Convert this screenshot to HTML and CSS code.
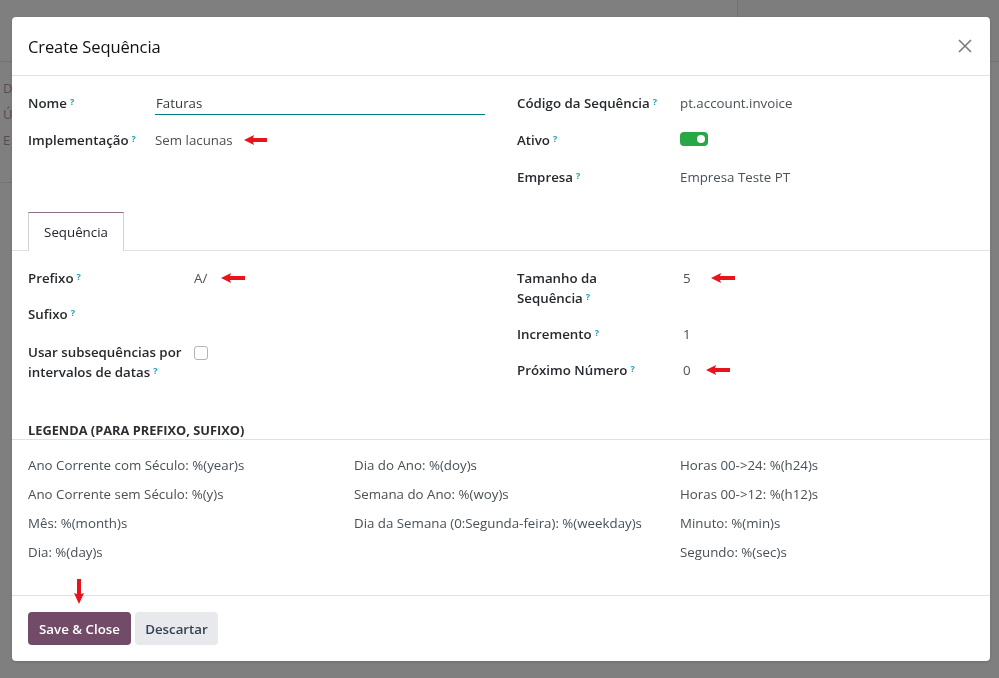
FILE: index.html
```html
<!DOCTYPE html>
<html lang="pt">
<head>
<meta charset="utf-8">
<title>Create Sequência</title>
<link rel="stylesheet" href="styles.css">
</head>
<body>
<div class="backdrop">
  <div class="bg-top">
    <div class="bg-top-left"></div>
    <div class="bg-top-right"></div>
  </div>
  <div class="bg-content">
    <div class="bg-line">D</div>
    <div class="bg-line">Ú</div>
    <div class="bg-line">E</div>
  </div>
</div>

<div class="modal">
  <div class="modal-header">
    <h4 class="modal-title">Create Sequência</h4>
    <button class="close-btn" aria-label="Close">
      <svg width="14" height="14" viewBox="0 0 14 14"><path d="M1 1 L13 13 M13 1 L1 13" stroke="#7b7b7b" stroke-width="1.6" fill="none"/></svg>
    </button>
  </div>

  <div class="modal-body">
    <div class="top-grid">
      <div class="col col-left">
        <div class="row">
          <div class="label lw-a">Nome<sup class="help">?</sup></div>
          <div class="value"><div class="input">Faturas</div></div>
        </div>
        <div class="row">
          <div class="label lw-a">Implementação<sup class="help">?</sup></div>
          <div class="value">Sem lacunas<svg class="arrow arrow-11" width="23" height="10" viewBox="0 0 23 10"><polygon points="0,5 10,0 9,3 23,3 23,7 9,7 10,10" fill="#e8141c"/></svg></div>
        </div>
      </div>
      <div class="col col-right">
        <div class="row">
          <div class="label lw-b">Código da Sequência<sup class="help">?</sup></div>
          <div class="value">pt.account.invoice</div>
        </div>
        <div class="row">
          <div class="label lw-b">Ativo<sup class="help">?</sup></div>
          <div class="value"><span class="toggle"><span class="knob"></span></span></div>
        </div>
        <div class="row">
          <div class="label lw-b">Empresa<sup class="help">?</sup></div>
          <div class="value">Empresa Teste PT</div>
        </div>
      </div>
    </div>

    <div class="tabs">
      <div class="tab active">Sequência</div>
    </div>

    <div class="seq-grid">
      <div class="col col-left">
        <div class="srow">
          <div class="label lw-c">Prefixo<sup class="help">?</sup></div>
          <div class="value">A/<svg class="arrow arrow-14" width="24" height="10" viewBox="0 0 24 10"><polygon points="0,5 10,0 9,3 24,3 24,7 9,7 10,10" fill="#e8141c"/></svg></div>
        </div>
        <div class="srow">
          <div class="label lw-c">Sufixo<sup class="help">?</sup></div>
          <div class="value"></div>
        </div>
        <div class="srow srow-tall">
          <div class="label lw-c">Usar subsequências por intervalos de datas<sup class="help">?</sup></div>
          <div class="value"><span class="checkbox"></span></div>
        </div>
      </div>
      <div class="col col-right">
        <div class="srow">
          <div class="label lw-d">Tamanho da Sequência<sup class="help">?</sup></div>
          <div class="value">5<svg class="arrow arrow-20" width="24" height="10" viewBox="0 0 24 10"><polygon points="0,5 10,0 9,3 24,3 24,7 9,7 10,10" fill="#e8141c"/></svg></div>
        </div>
        <div class="srow">
          <div class="label lw-d">Incremento<sup class="help">?</sup></div>
          <div class="value">1</div>
        </div>
        <div class="srow">
          <div class="label lw-d">Próximo Número<sup class="help">?</sup></div>
          <div class="value">0<svg class="arrow arrow-16" width="24" height="10" viewBox="0 0 24 10"><polygon points="0,5 10,0 9,3 24,3 24,7 9,7 10,10" fill="#e8141c"/></svg></div>
        </div>
      </div>
    </div>

    <div class="legend-title">Legenda (para prefixo, sufixo)</div>
    <div class="legend">
      <div>Ano Corrente com Século: %(year)s</div>
      <div>Dia do Ano: %(doy)s</div>
      <div>Horas 00-&gt;24: %(h24)s</div>
      <div>Ano Corrente sem Século: %(y)s</div>
      <div>Semana do Ano: %(woy)s</div>
      <div>Horas 00-&gt;12: %(h12)s</div>
      <div>Mês: %(month)s</div>
      <div>Dia da Semana (0:Segunda-feira): %(weekday)s</div>
      <div>Minuto: %(min)s</div>
      <div>Dia: %(day)s</div>
      <div></div>
      <div>Segundo: %(sec)s</div>
    </div>
  </div>

  <div class="modal-footer">
    <svg class="down-arrow" width="10" height="25" viewBox="0 0 10 25"><polygon points="5,25 0,14 3,15 3,0 7,0 7,15 10,14" fill="#e8141c"/></svg>
    <button class="btn btn-primary">Save &amp; Close</button>
    <button class="btn btn-secondary">Descartar</button>
  </div>
</div>
</body>
</html>
```

FILE: styles.css
```css
* { box-sizing: border-box; }

html, body {
  margin: 0;
  padding: 0;
  height: 100%;
}

body {
  background: #7f7f7f;
  font-family: "Open Sans", "Noto Sans", "Liberation Sans", sans-serif;
  font-size: 13.3px;
  color: #212529;
  overflow: hidden;
}

/* ---------- backdrop page (seen through overlay) ---------- */
.backdrop {
  height: 100%;
  background: #7f7f7f;
}
.bg-top {
  display: flex;
  height: 62px;
  border-bottom: 1px solid #737373;
}
.bg-top-left { width: 738px; border-right: 1px solid #727272; }
.bg-top-right { flex: 1; background: #7d7d7d; }
.bg-content {
  padding-top: 16px;
  border-bottom: 1px solid #737373;
  height: 121px;
  width: 40px;
}
.bg-line {
  color: #4f4f4f;
  font-size: 13px;
  line-height: 20px;
  padding-left: 3px;
  margin-bottom: 6px;
}

/* ---------- modal ---------- */
.modal {
  position: fixed;
  left: 12px;
  top: 17px;
  width: 978px;
  height: 644px;
  background: #fff;
  border-radius: 4px;
  display: flex;
  flex-direction: column;
  box-shadow: 0 1px 3px rgba(0,0,0,0.15);
}

.modal-header {
  height: 59px;
  display: flex;
  align-items: center;
  justify-content: space-between;
  padding: 0 16px;
  border-bottom: 1px solid #dee2e6;
}
.modal-title {
  margin: 0;
  font-size: 16.5px;
  font-weight: 400;
  color: #111;
  letter-spacing: -0.1px;
}
.close-btn {
  border: 0;
  background: transparent;
  padding: 0;
  width: 16px;
  height: 16px;
  display: flex;
  align-items: center;
  justify-content: center;
  margin-right: 1px;
  margin-top: -1px;
}

.modal-body {
  flex: 1;
  padding-top: 8px;
}

.col-left { width: 489px; padding-left: 16px; }
.col-right { flex: 1; padding-left: 16px; }

.top-grid, .seq-grid { display: flex; }

.row {
  display: flex;
  align-items: center;
  height: 37px;
}
.label {
  font-weight: 600;
  color: #262a2f;
  line-height: 20px;
  flex: none;
}
.lw-a { width: 127px; }
.lw-b { width: 163px; }
.lw-c { width: 166px; padding-right: 6px; }
.lw-d { width: 166px; padding-right: 40px; }

.help {
  color: #1b9ec1;
  font-size: 9px;
  font-weight: 700;
  margin-left: 3px;
  vertical-align: baseline;
  position: relative;
  top: -3px;
  line-height: 1;
}

.value {
  color: #495057;
  display: flex;
  align-items: center;
  line-height: 20px;
  flex: 1;
}
.col-left .row .value { padding-right: 4px; }

.input {
  width: 330px;
  border-bottom: 1px solid #017e84;
  padding: 1px 0 1px 1px;
  color: #353a40;
  margin-top: 1px;
}

.arrow { flex: none; }
.arrow-11 { margin-left: 11px; }
.arrow-14 { margin-left: 14px; }
.arrow-16 { margin-left: 15px; }
.arrow-20 { margin-left: 20px; }

.toggle {
  width: 28px;
  height: 14px;
  background: #28a745;
  border-radius: 4px;
  display: inline-flex;
  align-items: center;
  justify-content: flex-end;
  padding-right: 3px;
  margin-top: -1px;
}
.knob {
  width: 8px;
  height: 8px;
  border-radius: 50%;
  background: #fff;
}

/* ---------- tabs ---------- */
.tabs {
  display: flex;
  margin-top: 17px;
  padding-left: 16px;
  border-bottom: 1px solid #dee2e6;
}
.tab {
  height: 39px;
  width: 96px;
  display: flex;
  align-items: center;
  justify-content: center;
  color: #2c2230;
  border: 1px solid #d6d0d5;
  border-top-color: #8e6f87;
  border-bottom: 0;
  margin-bottom: -1px;
  background: #fff;
}

/* ---------- sequence section ---------- */
.seq-grid { padding-top: 9px; }
.srow {
  display: flex;
  align-items: flex-start;
  padding: 8px 0;
}
.srow .label, .srow .value { min-height: 20px; }
.srow-tall { padding-top: 10px; }
.checkbox {
  width: 14px;
  height: 14px;
  border: 1px solid #adb5bd;
  border-radius: 3px;
  background: #fff;
  margin-top: 2px;
}

/* ---------- legend ---------- */
.legend-title {
  margin-top: 31px;
  padding-left: 16px;
  font-weight: 700;
  text-transform: uppercase;
  color: #2b2f33;
  font-size: 12.8px;
  line-height: 18px;
  border-bottom: 1px solid #dee2e6;
}
.legend {
  display: grid;
  grid-template-columns: 326px 326px 1fr;
  grid-auto-rows: 29px;
  padding: 10px 16px 0;
  color: #495057;
}
.legend > div {
  display: flex;
  align-items: center;
}

/* ---------- footer ---------- */
.modal-footer {
  position: relative;
  height: 66px;
  border-top: 1px solid #dee2e6;
  display: flex;
  align-items: center;
  gap: 4px;
  padding: 0 16px;
}
.down-arrow {
  position: absolute;
  left: 62px;
  top: -17px;
}
.btn {
  height: 33px;
  border: 0;
  border-radius: 4px;
  font-family: inherit;
  font-size: 13.3px;
  font-weight: 600;
  padding: 0 8px;
  cursor: pointer;
}
.btn-primary {
  background: #714b67;
  color: #fff;
  width: 103px;
}
.btn-secondary {
  background: #e7e9ed;
  color: #374151;
  width: 83px;
}
```
